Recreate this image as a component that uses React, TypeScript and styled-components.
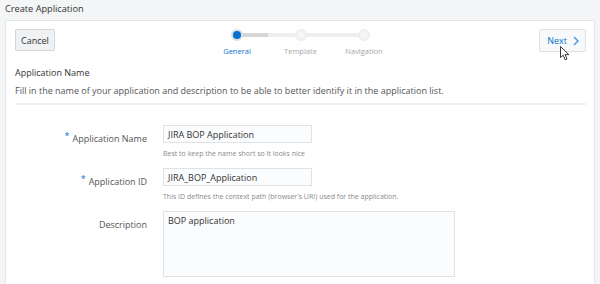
import styled, { createGlobalStyle } from "styled-components";

const GlobalStyle = createGlobalStyle`
	body {
		margin: 0;
		background: #f4f5f6;
		font-family: "Open Sans", "Noto Sans", Arial, sans-serif;
		color: #333;
	}
`;

const Page = styled.div`
	width: 600px;
	height: 284px;
	overflow: hidden;
	display: flex;
	flex-direction: column;
`;

const PageTitle = styled.div`
	font-size: 9.2px;
	line-height: 16px;
	color: #333;
	padding: 1px 0 0 5px;
	height: 20px;
	box-sizing: border-box;
`;

const Panel = styled.div`
	flex: 1;
	margin: 0 5px;
	background: #ffffff;
	border: 1px solid #e3e6e9;
	border-bottom: none;
	display: flex;
	flex-direction: column;
	padding: 8px 8px 0 9px;
`;

const Toolbar = styled.div`
	display: grid;
	grid-template-columns: 1fr auto 1fr;
	align-items: start;
	height: 38px;
`;

const Button = styled.button`
	height: 22px;
	padding: 0 5px;
	font-family: inherit;
	font-size: 9px;
	border-radius: 2px;
	border: 1px solid #d3d8dd;
	background: #eff1f3;
	color: #333;
	display: flex;
	align-items: center;
	gap: 6px;
	justify-self: start;
`;

const NextButton = styled(Button)`
	justify-self: end;
	height: 23px;
	background: #f8f9fb;
	border-color: #dde2e7;
	color: #0572ce;
	padding: 0 6px 0 7px;
	position: relative;
`;

const Cursor = styled.svg`
	position: absolute;
	left: 20px;
	top: 16px;
`;

const Train = styled.div`
	display: flex;
`;

const Stop = styled.div`
	width: 63.5px;
	display: flex;
	flex-direction: column;
	align-items: center;
	position: relative;
`;

const Track = styled.div<{ done?: boolean }>`
	position: absolute;
	left: 31.75px;
	top: 4px;
	width: 63.5px;
	height: 4px;
	background: #eceef0;
	&::before {
		content: "";
		display: ${(p) => (p.done ? "block" : "none")};
		width: 31px;
		height: 4px;
		background: #d4d6d8;
	}
`;

const Dot = styled.div<{ active?: boolean }>`
	width: 12px;
	height: 12px;
	border-radius: 50%;
	background: ${(p) => (p.active ? "#dcdee0" : "#eceef0")};
	display: flex;
	align-items: center;
	justify-content: center;
	position: relative;
	z-index: 1;
	&::after {
		content: "";
		width: 8px;
		height: 8px;
		border-radius: 50%;
		background: ${(p) => (p.active ? "#0572ce" : "#f4f5f6")};
	}
`;

const StopLabel = styled.div<{ active?: boolean }>`
	font-size: 7.5px;
	line-height: 10px;
	margin-top: 5px;
	color: ${(p) => (p.active ? "#0572ce" : "#a6a6a6")};
`;

const SectionTitle = styled.div`
	font-size: 9px;
	line-height: 12px;
	color: #333;
`;

const SectionText = styled.div`
	font-size: 9px;
	line-height: 14px;
	color: #555;
	margin-top: 5px;
	padding-bottom: 5px;
	border-bottom: 2px solid #eef0f2;
`;

const Form = styled.div`
	display: flex;
	flex-direction: column;
	gap: 9px;
	padding-top: 20px;
`;

const Row = styled.div`
	display: grid;
	grid-template-columns: 132px 1fr;
	column-gap: 16px;
`;

const Label = styled.div`
	font-size: 9px;
	line-height: 14px;
	color: #555;
	text-align: right;
	padding-top: 7px;
`;

const Star = styled.span`
	color: #0572ce;
	font-size: 9px;
	position: relative;
	top: -3px;
	margin-right: 3px;
`;

const Field = styled.div`
	display: flex;
	flex-direction: column;
`;

const Input = styled.div<{ w: number; h: number }>`
	width: ${(p) => p.w}px;
	height: ${(p) => p.h}px;
	box-sizing: border-box;
	border: 1px solid #dfe3e6;
	background: #fbfcfd;
	font-size: 9px;
	line-height: 14px;
	color: #333;
	padding: 2px 4px;
`;

const Help = styled.div`
	font-size: 7px;
	line-height: 10px;
	color: #8a8a8a;
	margin-top: 6px;
`;

export default function App() {
	return (
		<Page>
			<GlobalStyle />
			<PageTitle>Create Application</PageTitle>
			<Panel>
				<Toolbar>
					<Button>Cancel</Button>
					<Train>
						<Stop>
							<Track done />
							<Dot active />
							<StopLabel active>General</StopLabel>
						</Stop>
						<Stop>
							<Track />
							<Dot />
							<StopLabel>Template</StopLabel>
						</Stop>
						<Stop>
							<Dot />
							<StopLabel>Navigation</StopLabel>
						</Stop>
					</Train>
					<NextButton>
						Next
						<svg width="6" height="10" viewBox="0 0 6 10">
							<path d="M1 1 L5 5 L1 9" fill="none" stroke="#4a9be0" strokeWidth="1.5" />
						</svg>
						<Cursor width="10" height="15" viewBox="0 0 10 15">
							<path d="M0.5 0.5 L0.5 11.5 L3.2 9.2 L5.1 13.8 L7 13 L5.1 8.6 L8.8 8.6 Z" fill="#fff" stroke="#222" strokeWidth="0.9" />
						</Cursor>
					</NextButton>
				</Toolbar>
				<SectionTitle>Application Name</SectionTitle>
				<SectionText>
					Fill in the name of your application and description to be able to better identify it in the application list.
				</SectionText>
				<Form>
					<Row>
						<Label>
							<Star>*</Star>Application Name
						</Label>
						<Field>
							<Input w={149} h={18}>JIRA BOP Application</Input>
							<Help>Best to keep the name short so it looks nice</Help>
						</Field>
					</Row>
					<Row>
						<Label>
							<Star>*</Star>Application ID
						</Label>
						<Field>
							<Input w={149} h={18}>JIRA_BOP_Application</Input>
							<Help>This ID defines the context path (browser's URI) used for the application.</Help>
						</Field>
					</Row>
					<Row>
						<Label>Description</Label>
						<Field>
							<Input w={292} h={66}>BOP application</Input>
						</Field>
					</Row>
				</Form>
			</Panel>
		</Page>
	);
}
